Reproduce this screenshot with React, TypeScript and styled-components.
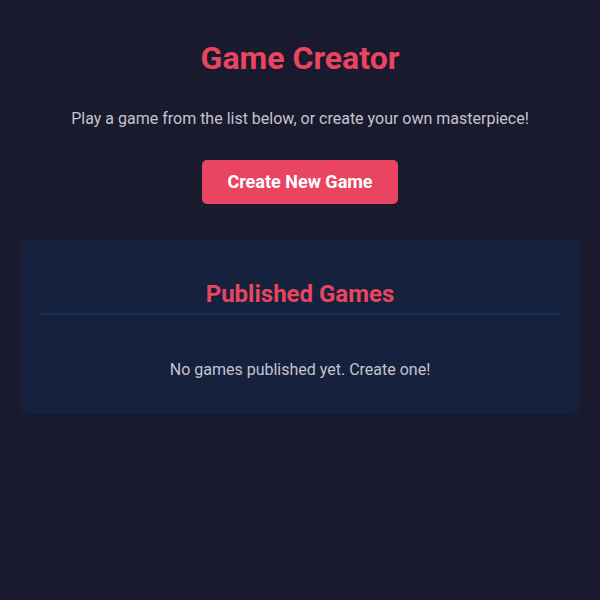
import React from 'react';
import styled, { createGlobalStyle } from 'styled-components';

const GlobalStyle = createGlobalStyle`
  html, body {
    margin: 0;
    padding: 0;
    background: #1a1a2e;
    min-height: 100%;
  }
  body {
    font-family: Roboto, 'Liberation Sans', sans-serif;
    color: #e0e0e0;
  }
`;

const Page = styled.div`
  min-height: 600px;
  box-sizing: border-box;
  padding: 20px;
  display: flex;
  flex-direction: column;
  align-items: center;
`;

const Title = styled.h1`
  margin: 20px 0 31px;
  font-size: 32px;
  font-weight: 700;
  line-height: 37.5px;
  color: #e94560;
`;

const Intro = styled.p`
  margin: 0 0 32px;
  font-size: 16px;
  line-height: 19px;
  color: #c4c4cc;
`;

const CreateButton = styled.button`
  background: #e94560;
  color: #ffffff;
  border: none;
  border-radius: 5px;
  padding: 12px 25px;
  font-family: inherit;
  font-size: 18px;
  font-weight: 700;
  line-height: 20px;
  cursor: pointer;
  margin-bottom: 36px;
`;

const Panel = styled.section`
  align-self: stretch;
  background: #16213e;
  border-radius: 8px;
  padding: 20px;
`;

const PanelTitle = styled.h2`
  margin: 20px 0 0;
  padding-bottom: 5px;
  border-bottom: 2px solid #0f3460;
  text-align: center;
  font-size: 24px;
  font-weight: 700;
  line-height: 28px;
  color: #e94560;
`;

const Empty = styled.p`
  margin: 45px 0 15px;
  text-align: center;
  font-size: 16px;
  line-height: 19px;
  color: #c4c4cc;
`;

const App: React.FC = () => {
  return (
    <>
      <GlobalStyle />
      <Page>
        <Title>Game Creator</Title>
        <Intro>Play a game from the list below, or create your own masterpiece!</Intro>
        <CreateButton>Create New Game</CreateButton>
        <Panel>
          <PanelTitle>Published Games</PanelTitle>
          <Empty>No games published yet. Create one!</Empty>
        </Panel>
      </Page>
    </>
  );
};

export default App;
